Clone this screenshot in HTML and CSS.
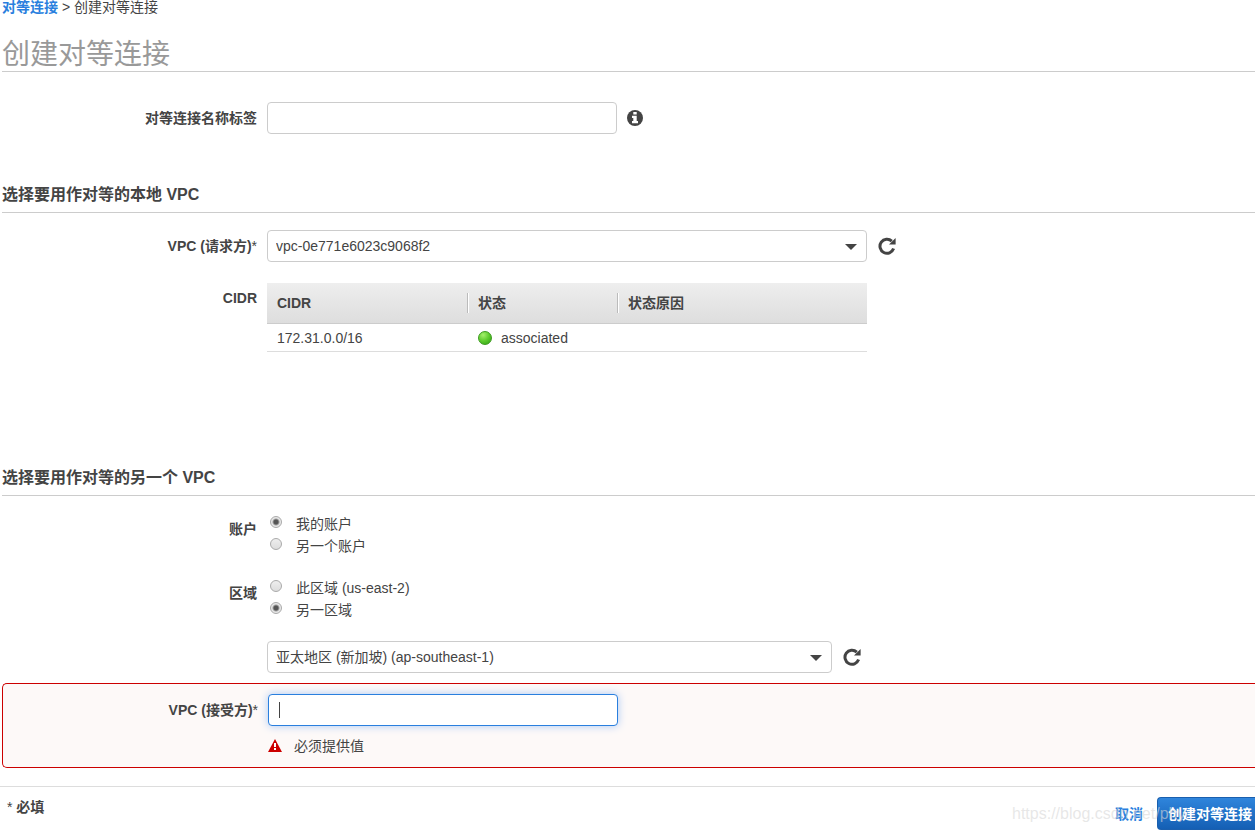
FILE: index.html
```html
<!DOCTYPE html>
<html lang="zh-CN">
<head>
    <meta charset="UTF-8">
    <meta name="viewport" content="width=device-width, initial-scale=1.0">
    <title>创建对等连接</title>
    <link rel="stylesheet" href="styles.css">
</head>
<body>
    <header class="page-header">
        <nav class="breadcrumb"><a href="#">对等连接</a> &gt; 创建对等连接</nav>
        <h1>创建对等连接</h1>
    </header>

    <form class="peering-form">
        <div class="form-row name-row">
            <label class="row-label" for="name-tag">对等连接名称标签</label>
            <div class="control">
                <input class="text-input" id="name-tag" type="text">
                <button class="icon-button" type="button" aria-label="信息">
                    <svg width="18" height="18" viewBox="0 0 18 18">
                        <circle cx="8" cy="9" r="8" fill="#444"/>
                        <path d="M6.3 3h3.4v2.5H6.3zM5 6.8h4.7V12H11v2.2H5V12h1.3V9H5z" fill="#fff"/>
                    </svg>
                </button>
            </div>
        </div>

        <section class="local-vpc">
            <h2>选择要用作对等的本地 VPC</h2>
            <div class="form-row">
                <label class="row-label" for="requester">VPC (请求方)<span class="star">*</span></label>
                <div class="control">
                    <div class="select-box">
                        <select id="requester">
                            <option>vpc-0e771e6023c9068f2</option>
                        </select>
                    </div>
                    <button class="icon-button" type="button" aria-label="刷新">
                        <svg width="20" height="18" viewBox="0 0 20 18">
                            <path d="M16.6 11.6A7 7 0 1 1 14.8 4.2" fill="none" stroke="#444" stroke-width="3"/>
                            <path d="M18.6 1v6.6H12z" fill="#444"/>
                        </svg>
                    </button>
                </div>
            </div>
            <div class="form-row cidr-row">
                <span class="row-label">CIDR</span>
                <table class="cidr-table">
                    <thead>
                        <tr>
                            <th class="col-cidr"><span>CIDR</span></th>
                            <th class="col-state"><span>状态</span></th>
                            <th><span>状态原因</span></th>
                        </tr>
                    </thead>
                    <tbody>
                        <tr>
                            <td>172.31.0.0/16</td>
                            <td><span class="state"><i class="dot"></i>associated</span></td>
                            <td></td>
                        </tr>
                    </tbody>
                </table>
            </div>
        </section>

        <section class="other-vpc">
            <h2>选择要用作对等的另一个 VPC</h2>
            <div class="form-row radio-row" role="radiogroup" aria-labelledby="account-label">
                <span class="row-label" id="account-label">账户</span>
                <div class="radios">
                    <label><input type="radio" name="account" checked>我的账户</label>
                    <label><input type="radio" name="account">另一个账户</label>
                </div>
            </div>
            <div class="form-row radio-row" role="radiogroup" aria-labelledby="region-label">
                <span class="row-label" id="region-label">区域</span>
                <div class="radios">
                    <label><input type="radio" name="region">此区域 (us-east-2)</label>
                    <label><input type="radio" name="region" checked>另一区域</label>
                </div>
            </div>
            <div class="form-row">
                <span></span>
                <div class="control">
                    <div class="select-box region-box">
                        <select aria-label="区域">
                            <option>亚太地区 (新加坡) (ap-southeast-1)</option>
                        </select>
                    </div>
                    <button class="icon-button" type="button" aria-label="刷新">
                        <svg width="20" height="18" viewBox="0 0 20 18">
                            <path d="M16.6 11.6A7 7 0 1 1 14.8 4.2" fill="none" stroke="#444" stroke-width="3"/>
                            <path d="M18.6 1v6.6H12z" fill="#444"/>
                        </svg>
                    </button>
                </div>
            </div>
            <div class="form-row error-row">
                <label class="row-label" for="accepter">VPC (接受方)<span class="star">*</span></label>
                <div>
                    <input class="text-input" id="accepter" type="text" autofocus>
                    <p class="error-text">
                        <svg width="14" height="14" viewBox="0 0 14 14">
                            <path d="M7 0l7 13H0z" fill="#c00"/>
                            <path d="M6 4h2v4H6zM6 9h2v2H6z" fill="#fff"/>
                        </svg>
                        必须提供值
                    </p>
                </div>
            </div>
        </section>

        <footer class="form-footer">
            <span class="required"><span class="star">*</span> 必填</span>
            <div class="actions">
                <a href="#">取消</a>
                <button class="primary" type="submit">创建对等连接</button>
                <span class="watermark">https://blog.csdn.net/phy</span>
            </div>
        </footer>
    </form>
</body>
</html>
```
FILE: styles.css
```css
* {
    box-sizing: border-box;
}

body {
    margin: 0;
    overflow: hidden;
    background: #fff;
    color: #444;
    font: 14px/20px "Liberation Sans", Arial, "Noto Sans CJK SC", sans-serif;
}

a {
    color: #2a7fde;
    font-weight: bold;
    text-decoration: none;
}

input,
select,
button {
    margin: 0;
    color: inherit;
    font: inherit;
}

.page-header,
.peering-form section,
.name-row {
    margin-left: 2px;
}

.breadcrumb {
    height: 17px;
    line-height: 14px;
}

h1 {
    height: 55px;
    margin: 0;
    padding-top: 18px;
    border-bottom: 1px solid #ccc;
    color: #999;
    font-size: 28px;
    font-weight: normal;
    line-height: 40px;
}

h2 {
    margin: 0 0 17px;
    padding-bottom: 7px;
    border-bottom: 1px solid #ccc;
    font-size: 16px;
    line-height: 20px;
}

.form-row {
    display: grid;
    grid-template-columns: 255px 1fr;
    column-gap: 10px;
}

.name-row {
    padding: 30px 0 51px;
}

.row-label {
    padding-top: 6px;
    font-weight: bold;
    text-align: right;
}

.star {
    font-weight: normal;
}

.control {
    display: flex;
    align-items: center;
    gap: 10px;
}

.text-input {
    display: block;
    width: 350px;
    height: 32px;
    padding: 0 10px;
    border: 1px solid #ccc;
    border-radius: 4px;
    background: #fff;
    outline: none;
}

/* steady text cursor in place of the blinking one */
.text-input:focus {
    border-color: #2a7fde;
    background: linear-gradient(#444, #444) 10px center / 1px 16px no-repeat #fff;
    box-shadow: 0 0 8px #a9c8f5;
    caret-color: transparent;
}

.text-input:focus:not(:placeholder-shown) {
    outline: none;
}

.icon-button {
    display: flex;
    padding: 0;
    border: none;
    background: none;
    cursor: pointer;
}

.select-box {
    position: relative;
    width: 600px;
}

.region-box {
    width: 565px;
}

.select-box::after {
    content: "";
    position: absolute;
    top: 14px;
    right: 10px;
    border: 6px solid transparent;
    border-top-color: #444;
    border-bottom: none;
    pointer-events: none;
}

.select-box select {
    display: block;
    width: 100%;
    height: 32px;
    padding: 0 8px;
    border: 1px solid #ccc;
    border-radius: 4px;
    background: #fff;
    appearance: none;
}

.local-vpc {
    height: 283px;
}

.cidr-row {
    padding-top: 21px;
}

.cidr-row .row-label {
    padding-top: 5px;
}

.cidr-table {
    width: 600px;
    border-collapse: separate;
    border-spacing: 0;
    table-layout: fixed;
}

.cidr-table thead {
    background: linear-gradient(#eee, #ddd);
}

.cidr-table th {
    height: 41px;
    padding: 0;
    border-bottom: 1px solid #ccc;
    text-align: left;
}

.cidr-table th span {
    display: block;
    height: 20px;
    padding-left: 10px;
}

.cidr-table th + th span {
    border-left: 1px solid #bbb;
    box-shadow: inset 1px 0 #fff;
}

.cidr-table td {
    height: 28px;
    padding: 0 10px;
    border-bottom: 1px solid #ddd;
}

.cidr-table td + td {
    padding-left: 11px;
}

.col-cidr {
    width: 200px;
}

.col-state {
    width: 150px;
}

.state {
    display: flex;
    align-items: center;
    gap: 9px;
}

.dot {
    width: 14px;
    height: 14px;
    border: 1px solid #3a9a1c;
    border-radius: 50%;
    background: radial-gradient(circle at 35% 25%, #a4f06c, #5dcb2d 50%, #2d9d12);
}

.radio-row {
    min-height: 44px;
    margin-bottom: 20px;
}

.radios label {
    display: flex;
    gap: 14px;
    height: 22px;
    line-height: 22px;
}

.radios input {
    width: 12px;
    height: 12px;
    margin: 3px 0 0 3px;
    border: 1px solid #aaa;
    border-radius: 50%;
    background: linear-gradient(#eee, #ddd);
    appearance: none;
}

.radios input:checked {
    background: radial-gradient(circle, #555 0 2px, #e8e8e8 4px);
}

.error-row {
    margin-top: 10px;
    padding: 10px 0 11px;
    border: 1px solid #c00;
    border-right: none;
    border-radius: 5px 0 0 5px;
    background: #fdf9f8;
}

.error-text {
    display: flex;
    align-items: center;
    gap: 12px;
    margin: 10px 0 0;
}

.form-footer {
    display: flex;
    justify-content: space-between;
    margin-top: 18px;
    padding: 10px 0 2px 7px;
    border-top: 1px solid #ddd;
}

.required {
    font-weight: bold;
}

.actions {
    position: relative;
    display: flex;
    align-items: center;
    gap: 14px;
}

.primary {
    height: 33px;
    padding: 0 3px 0 10px;
    border: 1px solid #1a5fae;
    border-right: none;
    border-radius: 4px 0 0 4px;
    background: linear-gradient(#2f85dc, #145fb4);
    color: #fff;
    font-weight: bold;
}

/* site mark lies over the action links */
.watermark {
    position: absolute;
    top: 7px;
    left: -103px;
    color: rgba(215, 215, 215, 0.6);
    font-size: 16px;
    pointer-events: none;
}
```
